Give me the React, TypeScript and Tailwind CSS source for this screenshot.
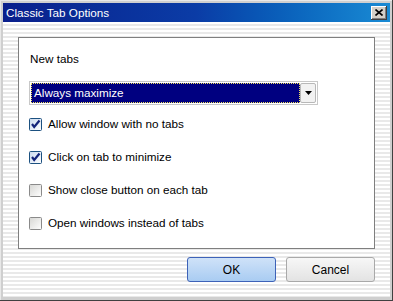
import React from 'react';

function CheckBox({ checked }: { checked: boolean }) {
  return (
    <svg width="13" height="13" viewBox="0 0 13 13" className="shrink-0">
      <defs>
        <linearGradient id={checked ? 'cbOn' : 'cbOff'} x1="0" y1="0" x2="1" y2="1">
          <stop offset="0" stopColor={checked ? '#c9d9ef' : '#d6d6d3'} />
          <stop offset="1" stopColor="#ffffff" />
        </linearGradient>
      </defs>
      <rect x="0.5" y="0.5" width="12" height="12" fill={`url(#${checked ? 'cbOn' : 'cbOff'})`} stroke={checked ? '#1c5180' : '#8a8a8a'} rx="1" />
      {checked && <path d="M3 6 L5.2 9 L10.5 2.5" fill="none" stroke="#13237a" strokeWidth="2.2" />}
    </svg>
  );
}

function Option({ label, checked }: { label: string; checked: boolean }) {
  return (
    <div className="flex items-center gap-[6px] h-[14px]">
      <CheckBox checked={checked} />
      <span>{label}</span>
    </div>
  );
}

export default function App() {
  return (
    <div
      className="w-[393px] h-[301px] bg-[#cfcfcf] p-[3px] pb-[4px] flex flex-col shadow-[inset_-1px_-1px_0_#404040,inset_1px_1px_0_#e8e8e8]"
      style={{ fontFamily: '"Liberation Sans", Arial, sans-serif' }}
    >
      <div className="h-[19px] flex items-center justify-between pl-[3px] pr-[3px] bg-gradient-to-r from-[#0a1f8c] via-[#0b3ca6] to-[#1a8bd4] shrink-0">
        <span className="text-white text-[11.7px] leading-none">Classic Tab Options</span>
        <div className="w-[16px] h-[14px] bg-[#d4d0c8] flex items-center justify-center shadow-[inset_-1px_-1px_0_#404040,inset_1px_1px_0_#ffffff,inset_-2px_-2px_0_#808080]">
          <svg width="8" height="7" viewBox="0 0 8 7">
            <path d="M0.5 0.5 L7.5 6.5 M7.5 0.5 L0.5 6.5" stroke="#000" strokeWidth="1.6" />
          </svg>
        </div>
      </div>
      <div className="flex-1 flex flex-col px-[15px] pt-[15px] bg-[image:repeating-linear-gradient(to_bottom,#ffffff_0px,#ffffff_2px,#e9e9e9_2px,#e9e9e9_4px)]">
        <div className="h-[212px] bg-white border border-[#7f7f7f] pl-[10px] pt-[14px] text-[11.7px] text-black">
          <div className="h-[14px] leading-[14px] pl-[1px]">New tabs</div>
          <div className="mt-[15px] w-[289px] h-[24px] border border-[#c8c8c8] flex p-px">
            <div className="flex-1 bg-[#000080] outline-1 outline-dotted outline-[#f0e060] -outline-offset-1 text-white flex items-center pl-[3px]">
              Always maximize
            </div>
            <div className="w-[16px] bg-[#f2f2f2] border border-[#b8b8b8] rounded-[2px] flex items-center justify-center">
              <svg width="7" height="4" viewBox="0 0 7 4">
                <path d="M0 0 H7 L3.5 4 Z" fill="#000" />
              </svg>
            </div>
          </div>
          <div className="mt-[12px] flex flex-col gap-[19px]">
            <Option label="Allow window with no tabs" checked />
            <Option label="Click on tab to minimize" checked />
            <Option label="Show close button on each tab" checked={false} />
            <Option label="Open windows instead of tabs" checked={false} />
          </div>
        </div>
        <div className="flex justify-end gap-[10px] mt-[8px] text-[12px]">
          <button className="w-[89px] h-[25px] rounded-[3px] border border-[#3d62b8] bg-gradient-to-b from-[#cfe2f8] to-[#a9ccf2] text-black">
            OK
          </button>
          <button className="w-[89px] h-[25px] rounded-[3px] border border-[#a9a9a9] bg-gradient-to-b from-[#f7f7f7] to-[#e3e3e3] text-black">
            Cancel
          </button>
        </div>
      </div>
    </div>
  );
}
